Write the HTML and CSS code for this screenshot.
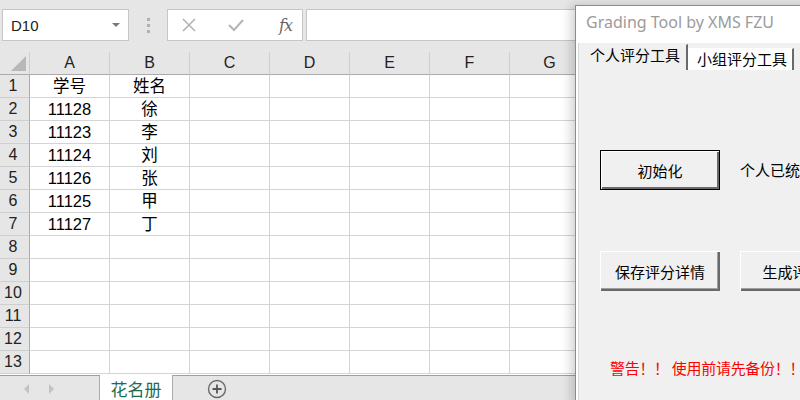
FILE: index.html
```html
<!DOCTYPE html>
<html lang="zh-CN">
<head>
    <meta charset="UTF-8">
    <title>花名册 - Excel</title>
    <link rel="stylesheet" href="styles.css">
</head>
<body>
    <div class="app">
        <div class="formula-bar">
            <div class="name-box">
                <span>D10</span>
                <span class="caret"></span>
            </div>
            <div class="grip"><i></i><i></i><i></i></div>
            <div class="fx-buttons">
                <svg width="16" height="16" viewBox="0 0 16 16"><path d="M2 2 L14 14 M14 2 L2 14" stroke="#b4b4b4" stroke-width="1.6" fill="none"/></svg>
                <svg width="18" height="16" viewBox="0 0 18 16"><path d="M2 8 L7 13 L16 3" stroke="#b4b4b4" stroke-width="2" fill="none"/></svg>
                <span class="fx">fx</span>
            </div>
            <div class="formula-input"></div>
        </div>

        <div class="sheet">
            <table class="grid">
                <colgroup>
                    <col class="col-head">
                    <col><col><col><col><col><col><col><col>
                </colgroup>
                <thead>
                    <tr>
                        <th class="corner"><span class="corner-tri"></span></th>
                        <th>A</th><th>B</th><th>C</th><th>D</th><th>E</th><th>F</th><th>G</th><th>H</th>
                    </tr>
                </thead>
                <tbody id="grid-body"></tbody>
            </table>
        </div>

        <div class="sheet-tabs">
            <div class="tab-nav">
                <span class="nav-left"></span>
                <span class="nav-right"></span>
            </div>
            <div class="sheet-tab">花名册</div>
            <div class="add-sheet">
                <svg width="20" height="20" viewBox="0 0 20 20"><circle cx="10" cy="10" r="8.5" stroke="#6a6a6a" stroke-width="1.4" fill="none"/><path d="M10 5.5 V14.5 M5.5 10 H14.5" stroke="#555" stroke-width="1.8"/></svg>
            </div>
            <div class="tab-spacer"></div>
            <div class="grip small"><i></i><i></i><i></i></div>
            <div class="hscroll">
                <span class="hscroll-btn"><span class="tri-left"></span></span>
                <span class="hscroll-track"></span>
            </div>
        </div>

        <!-- VBA user form floating over the sheet -->
        <div class="dialog">
            <div class="dialog-title">Grading Tool by XMS FZU</div>
            <div class="dialog-body">
                <div class="tabs">
                    <div class="tab active">个人评分工具</div>
                    <div class="tab">小组评分工具</div>
                </div>
                <div class="form-row first">
                    <button class="btn default">初始化</button>
                    <span class="label">个人已统计</span>
                </div>
                <div class="form-row">
                    <button class="btn">保存评分详情</button>
                    <button class="btn">生成评分表</button>
                </div>
                <div class="warning">警告！！ 使用前请先备份！！</div>
            </div>
        </div>
    </div>

    <script>
        const students = [
            ['学号', '姓名'],
            ['11128', '徐'],
            ['11123', '李'],
            ['11124', '刘'],
            ['11126', '张'],
            ['11125', '甲'],
            ['11127', '丁']
        ];

        const body = document.getElementById('grid-body');
        for (let r = 0; r < 13; r++) {
            const row = document.createElement('tr');
            const head = document.createElement('th');
            head.textContent = r + 1;
            row.appendChild(head);
            for (let c = 0; c < 8; c++) {
                const cell = document.createElement('td');
                if (students[r] && c < 2) {
                    cell.textContent = students[r][c];
                }
                row.appendChild(cell);
            }
            body.appendChild(row);
        }
    </script>
</body>
</html>
```

FILE: styles.css
```css
* {
    box-sizing: border-box;
}
body {
    margin: 0;
    font-family: "Liberation Sans", "Noto Sans CJK SC", sans-serif;
    background-color: #e6e6e6;
    color: #000;
}
.app {
    position: relative;
    width: 800px;
    height: 400px;
    overflow: hidden;
    display: flex;
    flex-direction: column;
}

/* formula bar */
.formula-bar {
    height: 52px;
    flex: none;
    display: flex;
    align-items: flex-start;
    padding: 9px 0 0 2px;
    background-color: #e6e6e6;
}
.name-box {
    width: 127px;
    height: 32px;
    background-color: #fff;
    border: 1px solid #c6c6c6;
    display: flex;
    align-items: center;
    justify-content: space-between;
    padding: 0 8px 0 8px;
    font-size: 15px;
    color: #222;
}
.caret {
    width: 0;
    height: 0;
    border-left: 4px solid transparent;
    border-right: 4px solid transparent;
    border-top: 4px solid #7a7a7a;
}
.grip {
    width: 38px;
    height: 32px;
    display: flex;
    flex-direction: column;
    align-items: center;
    justify-content: center;
    gap: 3px;
}
.grip i {
    width: 3px;
    height: 3px;
    background-color: #b0b0b0;
}
.fx-buttons {
    width: 136px;
    height: 32px;
    background-color: #fff;
    border: 1px solid #c6c6c6;
    display: flex;
    align-items: center;
    gap: 30px;
    padding-left: 13px;
}
.fx {
    font-family: "DejaVu Serif", "Liberation Serif", serif;
    font-style: italic;
    font-size: 16px;
    color: #666;
    margin-left: 4px;
    letter-spacing: -1px;
}
.formula-input {
    flex: 1;
    height: 32px;
    margin-left: 3px;
    background-color: #fff;
    border: 1px solid #c6c6c6;
}

/* grid */
.sheet {
    flex: none;
    height: 323px;
    overflow: hidden;
    background-color: #fff;
}
.grid {
    table-layout: fixed;
    width: 670px;
    border-collapse: separate;
    border-spacing: 0;
}
.grid col {
    width: 80px;
}
.grid col.col-head {
    width: 30px;
}
.grid th,
.grid td {
    height: 23px;
    padding: 0;
    border-right: 1px solid #d4d4d4;
    border-bottom: 1px solid #d4d4d4;
    text-align: center;
    font-size: 16px;
    line-height: 20px;
    font-weight: normal;
    white-space: nowrap;
    overflow: hidden;
}
.grid thead th {
    background-color: #e6e6e6;
    border-right-color: #cfcfcf;
    border-bottom-color: #ababab;
    color: #222;
}
.grid tbody th {
    background-color: #e6e6e6;
    border-right-color: #ababab;
    border-bottom-color: #cfcfcf;
    padding-right: 3px;
    color: #222;
}
.grid td {
    font-size: 16.5px;
}
.corner {
    position: relative;
}
.corner-tri {
    position: absolute;
    right: 3px;
    bottom: 3px;
    width: 0;
    height: 0;
    border-left: 15px solid transparent;
    border-bottom: 15px solid #b8b8b8;
}

/* sheet tabs */
.sheet-tabs {
    flex: 1;
    display: flex;
    align-items: stretch;
    border-top: 1px solid #9e9e9e;
    background-color: #e6e6e6;
}
.tab-nav {
    width: 100px;
    display: flex;
    align-items: center;
    gap: 20px;
    padding-left: 24px;
    border-right: 1px solid #ababab;
}
.nav-left,
.nav-right {
    width: 0;
    height: 0;
    border-top: 5px solid transparent;
    border-bottom: 5px solid transparent;
}
.nav-left {
    border-right: 5px solid #c3c3c3;
}
.nav-right {
    border-left: 5px solid #c3c3c3;
}
.sheet-tab {
    width: 73px;
    background-color: #fff;
    border-right: 1px solid #ababab;
    margin-top: -1px;
    display: flex;
    align-items: center;
    justify-content: center;
    font-family: "Noto Sans CJK SC", sans-serif;
    font-size: 17px;
    color: #1f6b52;
}
.add-sheet {
    width: 88px;
    display: flex;
    align-items: center;
    justify-content: center;
}
.tab-spacer {
    flex: 1;
}
.grip.small {
    width: 12px;
    height: auto;
    gap: 3px;
}
.grip.small i {
    width: 3px;
    height: 4px;
    background-color: #b8b8b8;
}
.hscroll {
    width: 80px;
    display: flex;
    padding: 5px 0 0 14px;
}
.hscroll-btn {
    width: 19px;
    height: 21px;
    background-color: #fff;
    border: 1px solid #c0c0c0;
    display: flex;
    align-items: center;
    justify-content: center;
}
.tri-left {
    width: 0;
    height: 0;
    border-top: 4px solid transparent;
    border-bottom: 4px solid transparent;
    border-right: 4px solid #606060;
}
.hscroll-track {
    flex: 1;
    height: 21px;
    margin-left: 1px;
    background-color: #fff;
    border: 1px solid #c0c0c0;
}

/* user form */
.dialog {
    position: absolute;
    left: 575px;
    top: 5px;
    width: 240px;
    height: 400px;
    background-color: #fff;
    border: 1px solid #8c8c8c;
    box-shadow: -4px 0 10px rgba(0, 0, 0, 0.18);
    display: flex;
    flex-direction: column;
}
.dialog-title {
    height: 37px;
    flex: none;
    padding: 5px 0 0 10px;
    font-family: "Noto Sans", sans-serif;
    font-size: 16px;
    color: #9b9b9b;
}
.dialog-body {
    flex: 1;
    margin-left: 2px;
    border-left: 1px solid #d8d8d8;
    background-color: #f0f0f0;
    font-family: "Noto Sans CJK SC", sans-serif;
    font-size: 15px;
    padding-left: 7px;
}
.tabs {
    display: flex;
    align-items: flex-end;
    height: 26px;
    margin-top: 1px;
}
.tab {
    height: 22px;
    padding: 0 5px 0 8px;
    line-height: 19px;
    background-color: #fff;
    border-top: 1px solid #fff;
    border-left: 1px solid #fff;
    border-right: 2px solid #696969;
}
.tab.active {
    height: 26px;
    padding: 0 6px 0 3px;
    line-height: 20px;
    background-color: #f0f0f0;
    border-color: #f0f0f0;
    border-right-color: #696969;
}
.form-row {
    display: flex;
    align-items: center;
    gap: 20px;
    margin-left: 14px;
}
.form-row.first {
    margin-top: 80px;
}
.form-row + .form-row {
    margin-top: 61px;
}
.btn {
    width: 120px;
    height: 40px;
    flex: none;
    background-color: #f0f0f0;
    font-family: "Noto Sans CJK SC", sans-serif;
    font-size: 15px;
    color: #000;
    border: none;
    padding: 0;
    box-shadow: inset 1px 1px 0 #fff, inset -2px -2px 0 #696969, inset -3px -3px 0 #a0a0a0;
}
.btn.default {
    border: 1px solid #000;
    box-shadow: inset 1px 1px 0 #fff, inset -2px -2px 0 #696969;
}
.label {
    white-space: nowrap;
    padding-bottom: 2px;
}
.warning {
    margin: 66px 0 0 24px;
    white-space: nowrap;
    color: #ff0000;
    font-size: 15px;
    letter-spacing: -0.3px;
}
```
